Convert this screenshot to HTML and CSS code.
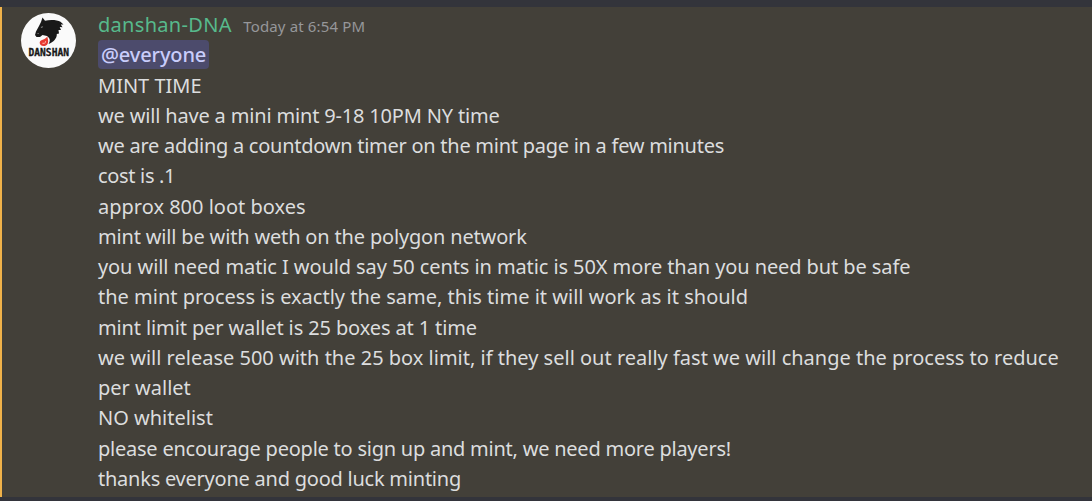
FILE: index.html
```html
<!DOCTYPE html>
<html lang="en">
<head>
<meta charset="utf-8">
<title>Announcement</title>
<link rel="stylesheet" href="styles.css">
</head>
<body>
<article class="message">
  <svg class="avatar" viewBox="0.5 0.5 55 55" role="img" aria-label="Danshan">
    <circle cx="28" cy="28" r="27.5" fill="#fafafa"/>
    <path d="M22 5 L24.5 8.2 C30 7 37 7.5 40 9.2 L43 12 L40.3 12 L42 14.8 L39.2 14.5 L40.5 17.5 L38 17.5 L38.5 21 L36.3 21.5 C36.5 26 33 29.5 28 31.5 C30.5 28 29 25 26.5 23.5 L22 22.5 L19.5 24.5 L16 24.5 L14.5 22.5 L15.5 19 L18.5 13.5 L20.5 9.5 Z" fill="#191919"/>
    <path d="M20 14.5 L22.7 13.8 L21.5 15.4 Z M16 21.5 L18.5 20.5 L18 21.5 Z" fill="#999"/>
    <path d="M26.8 24 C27.5 27 28.8 31 25.5 33 C22.5 34.5 18.8 33 19.2 29.8 C19.5 27.8 21 28 22.8 27 C24.5 26.3 25.8 25.5 26.8 24 Z" fill="#e63a30"/>
    <path d="M25 28.5 C25.5 30.5 23.5 31.5 22 30.5" fill="none" stroke="#ffa094" stroke-width="1.1"/>
    <text class="logo-text" x="8" y="43.2" textLength="40.5" lengthAdjust="spacingAndGlyphs">DANSHAN</text>
  </svg>
  <div class="content">
    <header class="heading"><span class="author">danshan-DNA</span><time class="time">Today at 6:54 PM</time></header>
    <div class="line"><span class="mention">@everyone</span></div>
    <div class="line">MINT TIME</div>
    <div class="line snug">we will have a mini mint 9-18 10PM NY time</div>
    <div class="line tighter">we are adding a countdown timer on the mint page in a few minutes</div>
    <div class="line tightest">cost is .1</div>
    <div class="line">approx 800 loot boxes</div>
    <div class="line snug">mint will be with weth on the polygon network</div>
    <div class="line slight">you will need matic I would say 50 cents in matic is 50X more than you need but be safe</div>
    <div class="line">the mint process is exactly the same, this time it will work as it should</div>
    <div class="line close">mint limit per wallet is 25 boxes at 1 time</div>
    <div class="line">we will release 500 with the 25 box limit, if they sell out really fast we will change the process to reduce</div>
    <div class="line">per wallet</div>
    <div class="line">NO whitelist</div>
    <div class="line tight">please encourage people to sign up and mint, we need more players!</div>
    <div class="line tight">thanks everyone and good luck minting</div>
  </div>
</article>
</body>
</html>
```
FILE: styles.css
```css
* { box-sizing: border-box; }
body { margin: 0; height: 501px; padding: 7px 0 4px; background: #33343b; overflow: hidden; }
.message { display: flex; height: 490px; border-left: 2px solid #f0b24a; background: #434039; color: #dcddde; font-family: "Noto Sans", sans-serif; }
.avatar { flex: none; width: 55px; height: 55px; margin: 6px 22px 0 19px; }
.logo-text { font: bold 9.8px "DejaVu Sans Mono", monospace; fill: #171717; stroke: #171717; stroke-width: 0.3; }
.content { padding-top: 3px; }
.heading { display: flex; align-items: baseline; height: 30.25px; line-height: 30px; }
.author { color: #57ba8c; font-size: 20px; letter-spacing: 0.3px; }
.time { margin-left: 11.5px; color: #96979a; font-size: 15px; letter-spacing: 0.15px; }
.line { height: 30.25px; line-height: 30.25px; font-size: 20px; white-space: nowrap; }
.mention { display: inline-block; height: 29px; line-height: 29px; padding: 0 3px; border-radius: 4px; background: #4c4b6c; color: #c9cdfb; font-weight: 500; letter-spacing: -0.13px; }
.slight { letter-spacing: -0.09px; }
.close { letter-spacing: -0.12px; }
.snug { letter-spacing: -0.17px; }
.tight { letter-spacing: -0.235px; }
.tighter { letter-spacing: -0.26px; }
.tightest { letter-spacing: -0.33px; }
```
